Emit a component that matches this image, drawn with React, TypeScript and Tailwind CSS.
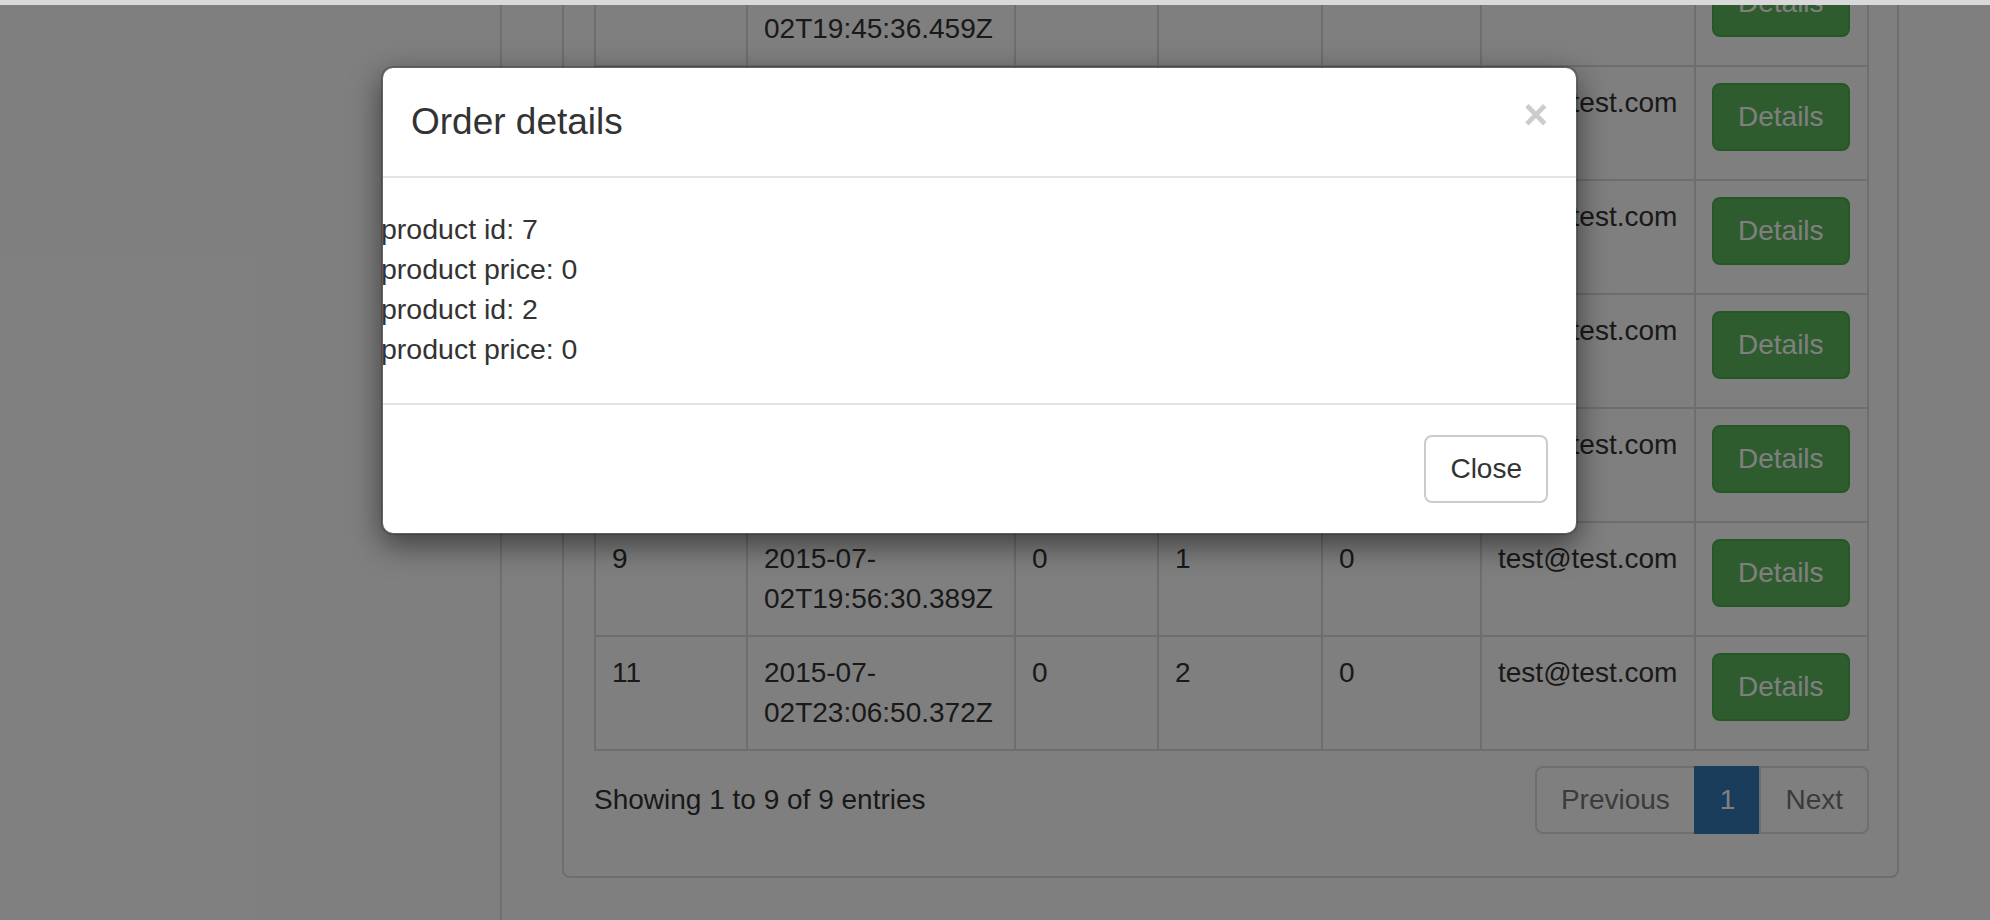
import React from 'react';

type Order = {
  id: string;
  date: [string, string];
  a: string;
  b: string;
  c: string;
  email: string;
};

const orders: Order[] = [
  { id: '3', date: ['2015-07-', '02T19:45:36.459Z'], a: '0', b: '1', c: '0', email: 'test@test.com' },
  { id: '4', date: ['2015-07-', '02T19:47:12.104Z'], a: '0', b: '2', c: '0', email: 'test@test.com' },
  { id: '5', date: ['2015-07-', '02T19:49:58.731Z'], a: '0', b: '1', c: '0', email: 'test@test.com' },
  { id: '6', date: ['2015-07-', '02T19:51:03.226Z'], a: '0', b: '2', c: '0', email: 'test@test.com' },
  { id: '7', date: ['2015-07-', '02T19:53:44.910Z'], a: '0', b: '1', c: '0', email: 'test@test.com' },
  { id: '9', date: ['2015-07-', '02T19:56:30.389Z'], a: '0', b: '1', c: '0', email: 'test@test.com' },
  { id: '11', date: ['2015-07-', '02T23:06:50.372Z'], a: '0', b: '2', c: '0', email: 'test@test.com' },
];

const cell = 'border-r-2 border-b-2 border-[#ddd] p-[16px]';

const OrderRow: React.FC<{ order: Order }> = ({ order }) => (
  <div className="grid grid-cols-[152px_268px_143px_164px_159px_214px_173px]">
    <div className={cell}>{order.id}</div>
    <div className={cell}>
      {order.date[0]}
      <br />
      {order.date[1]}
    </div>
    <div className={cell}>{order.a}</div>
    <div className={cell}>{order.b}</div>
    <div className={cell}>{order.c}</div>
    <div className={cell}>{order.email}</div>
    <div className={cell}>
      <button className="rounded-[8px] border-2 border-[#4cae4c] bg-[#5cb85c] px-[24px] py-[12px] leading-[40px] text-white">
        Details
      </button>
    </div>
  </div>
);

const App: React.FC = () => {
  return (
    <div className="flex h-screen w-full flex-col overflow-hidden bg-white font-['Liberation_Sans',Arial,sans-serif] text-[28px] leading-[40px] text-[#333]">
      <div className="h-[5px] shrink-0 bg-[#d9d9d9]" />

      <div className="relative flex-1 overflow-hidden">
        {/* page under the modal */}
        <div className="flex h-full">
          <aside className="w-[502px] shrink-0 border-r-2 border-[#dedede]" />
          <main className="flex-1 pl-[60px]">
            <div className="-mt-[86px] w-[1337px] rounded-[8px] border-2 border-[#ddd] px-[30px] pt-[30px] pb-[42px]">
              <div className="w-[1275px] border-t-2 border-l-2 border-[#ddd]">
                {orders.map((o) => (
                  <OrderRow key={o.id} order={o} />
                ))}
              </div>
              <div className="mt-[15px] flex w-[1275px] items-center justify-between">
                <div>Showing 1 to 9 of 9 entries</div>
                <div className="flex">
                  <span className="rounded-l-[8px] border-2 border-[#ddd] px-[24px] py-[12px] text-[#777]">Previous</span>
                  <span className="-ml-[2px] border-2 border-[#337ab7] bg-[#337ab7] px-[24px] py-[12px] text-white">1</span>
                  <span className="-ml-[2px] rounded-r-[8px] border-2 border-[#ddd] px-[24px] py-[12px] text-[#777]">Next</span>
                </div>
              </div>
            </div>
          </main>
        </div>

        {/* backdrop + modal */}
        <div className="absolute inset-0 bg-black/50">
          <div className="mt-[61px] ml-[381px] w-[1197px] rounded-[12px] border-2 border-black/20 bg-white bg-clip-padding shadow-[0_10px_30px_rgba(0,0,0,0.5)]">
            <div className="flex items-start justify-between border-b-2 border-[#e5e5e5] px-[28px] py-[29px]">
              <h4 className="text-[37px] leading-[50px] font-medium text-[#333]">Order details</h4>
              <button className="-mt-[3px] text-[42px] leading-none font-bold text-[#ccc]">×</button>
            </div>
            <div className="-ml-[2px] pt-[31px] pb-[34px] text-[28.5px]">
              <div>product id: 7</div>
              <div>product price: 0</div>
              <div>product id: 2</div>
              <div>product price: 0</div>
            </div>
            <div className="flex justify-end border-t-2 border-[#e5e5e5] px-[28px] pt-[30px] pb-[30px]">
              <button className="rounded-[8px] border-2 border-[#ccc] bg-white px-[24px] py-[12px] leading-[40px] text-[#333]">
                Close
              </button>
            </div>
          </div>
        </div>
      </div>
    </div>
  );
};

export default App;
